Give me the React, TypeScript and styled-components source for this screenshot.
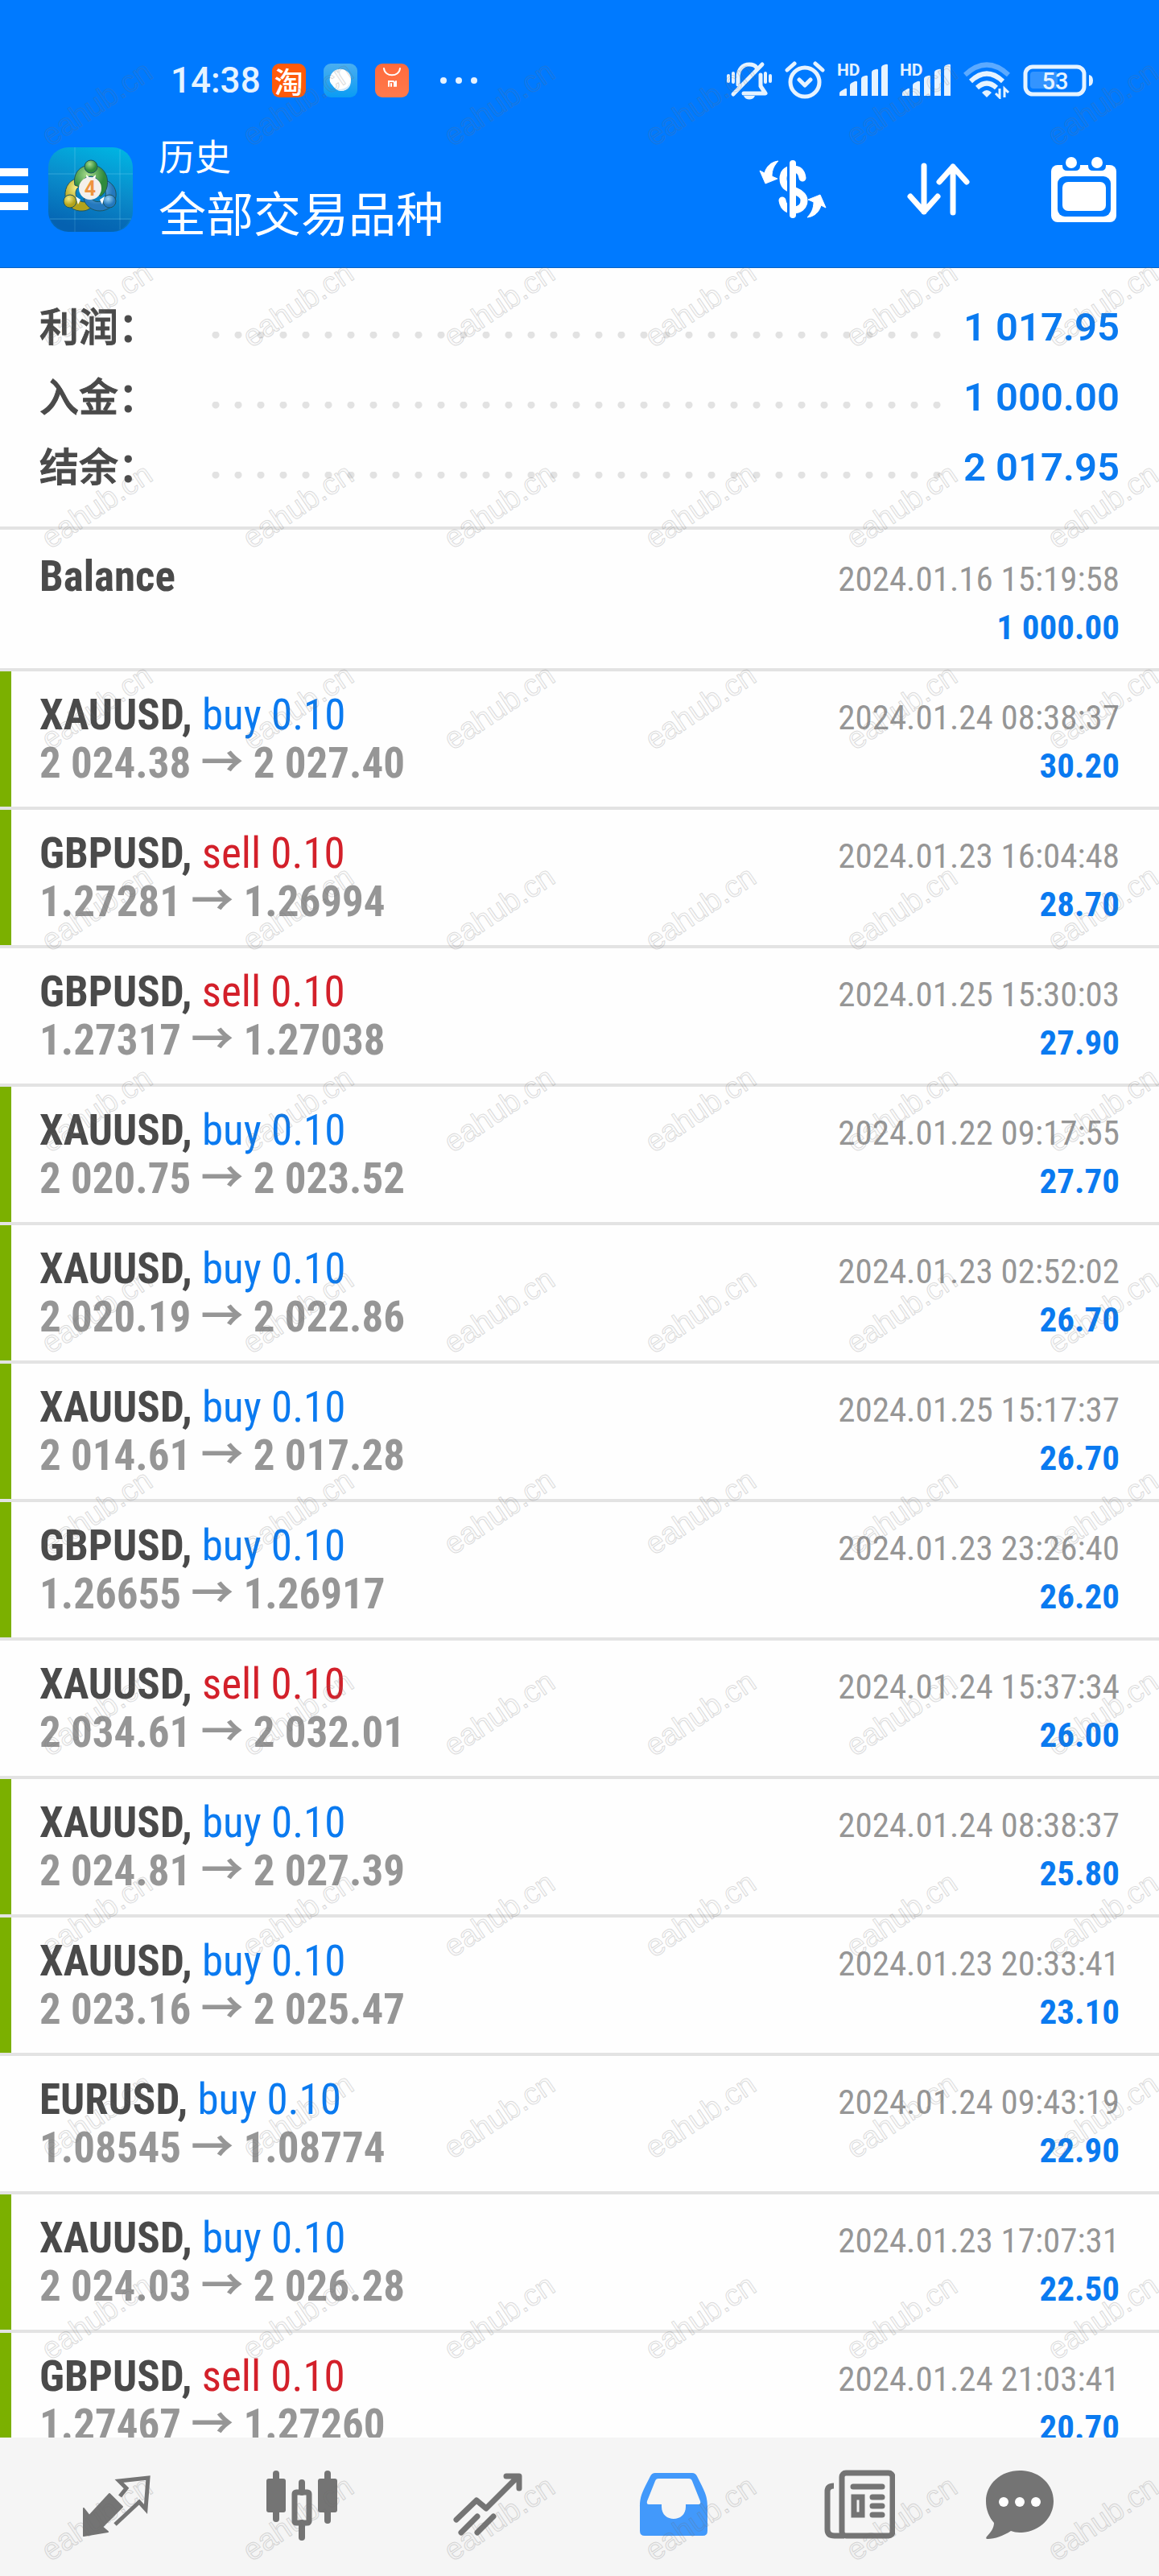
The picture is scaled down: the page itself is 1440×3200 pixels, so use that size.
import React from 'react';
import styled, { createGlobalStyle } from 'styled-components';

const color = {
  header: '#007aff',
  headerEdge: '#0a63c4',
  accent: '#0a7af0',
  sell: '#d3202a',
  ink: '#4a4a4a',
  muted: '#969696',
  line: '#e3e3e3',
  mark: '#7bb000',
  nav: '#f5f5f5',
  navIcon: '#747474',
  navActive: '#4299fb',
};

const sans = `Roboto, "Noto Sans CJK SC", sans-serif`;
const condensed = `"Roboto Condensed", Roboto, "Noto Sans CJK SC", sans-serif`;
const cjk = `"Noto Sans CJK SC", sans-serif`;

const GlobalStyle = createGlobalStyle`
  * { box-sizing: border-box; }
  body { margin: 0; background: #fefefe; font-family: ${sans}; }
  button { border: 0; margin: 0; padding: 0; background: none; color: inherit; font: inherit; cursor: pointer; }
`;

const Screen = styled.div`
  position: relative;
  display: flex;
  flex-direction: column;
  height: 100vh;
  overflow: hidden;
`;

const Header = styled.header`
  flex: none;
  color: #fff;
  background: ${color.header};
  border-bottom: 1px solid ${color.headerEdge};
`;

const StatusBar = styled.div`
  display: flex;
  align-items: center;
  justify-content: space-between;
  height: 140px;
  padding: 60px 82px 0 212px;
  color: #e6f3ff;
`;

const StatusGroup = styled.div<{ $gap: number }>`
  display: flex;
  align-items: center;
  gap: ${(p) => p.$gap}px;
`;

const Clock = styled.time`
  font-size: 44px;
  font-weight: 500;
  line-height: 44px;
`;

const AppBadge = styled.span<{ $bg: string }>`
  display: flex;
  align-items: center;
  justify-content: center;
  width: 42px;
  height: 42px;
  border-radius: 9px;
  background: ${(p) => p.$bg};
  color: #fff;
  font: 500 36px/42px ${cjk};
`;

const TitleBar = styled.div`
  display: flex;
  align-items: center;
  height: 192px;
  padding: 0 45px 2px 0;
`;

const MenuButton = styled.button`
  display: flex;
  flex-direction: column;
  gap: 11px;
  width: 60px;
`;

const MenuLine = styled.span`
  width: 35px;
  height: 10px;
  background: #fff;
`;

const Titles = styled.div`
  flex: 1;
  padding: 0 0 4px 32px;
  font-family: ${cjk};
`;

const Caption = styled.div`
  font-size: 45px;
  line-height: 60px;
`;

const Heading = styled.h1`
  margin: 0;
  font-size: 59px;
  font-weight: 400;
  line-height: 80px;
`;

const Actions = styled.div`
  display: flex;
  gap: 85px;
`;

const IconButton = styled.button`
  display: flex;
  align-items: center;
  justify-content: center;
  width: 96px;
  height: 96px;
`;

const Summary = styled.dl`
  flex: none;
  margin: 0;
  padding: 30px 49px;
  border-bottom: 4px solid ${color.line};
`;

const SummaryRow = styled.div`
  display: flex;
  align-items: center;
  height: 87px;
`;

const SummaryLabel = styled.dt`
  width: 214px;
  padding-bottom: 7px;
  color: ${color.ink};
  font: 500 49px/80px ${cjk};
  -webkit-text-stroke: 1px ${color.ink};
`;

const Leader = styled.span`
  flex: 1;
  height: 29px;
  background: radial-gradient(circle at 5px 4px, #e2e2e2 4px, transparent 5px) left bottom / 28px 9px repeat-x;
`;

const SummaryValue = styled.dd`
  min-width: 221px;
  margin: 0;
  color: ${color.accent};
  font-size: 49px;
  font-weight: 600;
  line-height: 87px;
  text-align: right;
`;

const Deals = styled.ul`
  flex: 1;
  min-height: 0;
  margin: 0;
  padding: 4px 0 0;
  overflow-y: auto;
  scrollbar-width: none;
  list-style: none;
  font-family: ${condensed};
`;

const Deal = styled.li`
  position: relative;
  padding: 24px 49px;
  border-bottom: 4px solid ${color.line};
`;

const Mark = styled.span`
  position: absolute;
  inset: 0 auto 0 0;
  width: 14px;
  background: ${color.mark};
`;

const Line = styled.div`
  display: flex;
  align-items: baseline;
  justify-content: space-between;
  height: 60px;
  font-size: 54px;
  line-height: 60px;
  white-space: pre;

  /* keeps the baseline of a line that holds only small text */
  &::before {
    content: '\\200b';
    width: 0;
  }
`;

const Symbol = styled.span`
  margin-right: auto;
  color: ${color.ink};
  font-size: 53px;
  font-weight: 700;
`;

const Side = styled.span<{ $sell: boolean }>`
  color: ${(p) => (p.$sell ? color.sell : color.accent)};
  font-weight: 400;
`;

const Prices = styled.span`
  color: ${color.muted};
  font-size: 53px;
  font-weight: 700;
`;

const Arrow = styled.span`
  font-family: ${cjk};
  font-weight: 700;
  line-height: 0;
`;

const Stamp = styled.time`
  color: ${color.muted};
  font-size: 43px;
`;

const Profit = styled.span`
  margin-left: auto;
  color: ${color.accent};
  font-size: 43px;
  font-weight: 700;
`;

const NavBar = styled.nav`
  flex: none;
  display: grid;
  grid-template-columns: repeat(5, 231fr) 168fr;
  height: 172px;
  padding: 0 89px 4px 28px;
  background: ${color.nav};
`;

const NavButton = styled.button<{ $active?: boolean }>`
  display: flex;
  align-items: center;
  justify-content: center;
  color: ${(p) => (p.$active ? color.navActive : color.navIcon)};
`;

const WatermarkLayer = styled.div`
  position: absolute;
  inset: 0 -250px 0 0;
  display: grid;
  grid-template-columns: repeat(auto-fill, 250px);
  grid-auto-rows: 250px;
  overflow: hidden;
  pointer-events: none;
`;

const Watermark = styled.span`
  display: flex;
  align-items: center;
  justify-content: center;
  padding-right: 12px;
  color: rgba(128, 128, 128, 0.04);
  font: 38px/40px "Liberation Sans", sans-serif;
  -webkit-text-stroke: 1px rgba(110, 110, 110, 0.25);
  transform: rotate(-34deg);
`;

const BellOff = () => (
  <svg width="56" height="48" viewBox="0 0 56 48" fill="none" stroke="currentColor" strokeWidth="5" strokeLinecap="round" strokeLinejoin="round">
    <path d="M8 41 44 4M14 29V20C14 10 20 4 28 4c4 0 7 1 9 4M42 17v14l6 9H21" />
    <path d="M2 18v7M8 15v11M48 15v11M54 18v7" strokeWidth="4" />
    <path d="M21 43h14c-2 6-12 6-14 0z" fill="currentColor" stroke="none" />
  </svg>
);

const Alarm = () => (
  <svg width="50" height="48" viewBox="0 0 50 48" fill="none" stroke="currentColor" strokeWidth="5" strokeLinecap="round" strokeLinejoin="round">
    <circle cx="25" cy="26" r="18" />
    <path d="m18 23 7 7 7-7M3 11l9-8M47 11l-9-8" />
  </svg>
);

const Signal = () => (
  <svg width="62" height="42" viewBox="0 0 62 42" fill="currentColor" overflow="visible">
    <text x="-1" y="15" fontFamily="Roboto, sans-serif" fontSize="21" fontWeight="700">HD</text>
    <path d="M2 37q0-2 2-3l5-3q2-1 2 1v8H2zM15 27q0-2 2-3l4-2q3-1 3 1v17h-9zM29 19q0-2 2-3l3-1q3-1 3 1v24h-8zM42 11q0-2 2-3l3-1q3-1 3 1v32h-8zM54 5q0-2 2-3l3-1q3-1 3 1v38h-8z" />
  </svg>
);

const Wifi = () => (
  <svg width="58" height="46" viewBox="0 0 58 46" fill="none" stroke="currentColor" strokeWidth="6">
    <path d="M2 16Q29-9 56 16" opacity=".4" />
    <path d="M9 24q20-19 40 0M17 32q12-11 24 0" />
    <path d="m29 44-6-6q6-6 12 0z" fill="currentColor" stroke="none" />
    <path d="M45 33v11l-5-5M51 44V33l5 5" strokeWidth="3" />
  </svg>
);

const Battery = () => (
  <svg width="87" height="40" viewBox="0 0 87 40" overflow="visible">
    <rect x="9" y="9" width="34" height="21" rx="4" fill="#fff" opacity=".2" />
    <rect x="3" y="3" width="73" height="34" rx="9" fill="none" stroke="currentColor" strokeWidth="5" />
    <path d="M82 13q5 1 5 7t-5 7z" fill="currentColor" />
    <text x="40" y="31" textAnchor="middle" fill="currentColor" fontFamily="Roboto, sans-serif" fontSize="29" fontWeight="500">53</text>
  </svg>
);

const BirdIcon = () => (
  <svg width="42" height="42" viewBox="0 0 42 42">
    <path d="M8 17C10 10 16 6 23 7c7 1 12 7 11 14 0 8-5 13-12 13-5 0-8-3-11-7-3-3-4-6-3-10z" fill="#fff" />
    <path d="M33 15c3 10-4 18-17 17 10 5 20-1 17-17z" fill="#cfe8fb" />
  </svg>
);

const StoreIcon = () => (
  <svg width="42" height="42" viewBox="0 0 42 42" fill="none" stroke="#fff" strokeWidth="2" strokeLinecap="round">
    <path d="M11 6c1 11 19 11 20 0" />
    <path d="M17 28v-6h5q2 0 2 2v4M20 25v3M26 22v6" />
  </svg>
);

const MoreIcon = styled.svg`
  margin-left: 16px;
`;

const More = () => (
  <MoreIcon width="48" height="10" viewBox="0 0 48 10" fill="currentColor">
    <circle cx="5" cy="5" r="4" />
    <circle cx="24" cy="5" r="4" />
    <circle cx="43" cy="5" r="4" />
  </MoreIcon>
);

const AppLogo = () => (
  <svg width="105" height="105" viewBox="0 0 105 105">
    <defs>
      <linearGradient id="tile" x1=".8" y1="0" x2=".5" y2="1">
        <stop offset="0" stopColor="#00b4e2" />
        <stop offset=".5" stopColor="#0a8ccb" />
        <stop offset="1" stopColor="#0566b4" />
      </linearGradient>
      <radialGradient id="green" cx=".4" cy=".3">
        <stop offset="0" stopColor="#a9dc8c" />
        <stop offset="1" stopColor="#2f8a3c" />
      </radialGradient>
      <radialGradient id="yellow" cx=".4" cy=".3">
        <stop offset="0" stopColor="#f4ec86" />
        <stop offset="1" stopColor="#b3a31c" />
      </radialGradient>
      <radialGradient id="blue" cx=".4" cy=".3">
        <stop offset="0" stopColor="#9ad4f5" />
        <stop offset="1" stopColor="#2478bd" />
      </radialGradient>
    </defs>
    <rect width="105" height="105" rx="25" fill="url(#tile)" />
    <path d="M33 0v105M89 3v99M0 33h105M2 89h101" stroke="#7fd6f2" strokeOpacity=".35" />
    <path d="M4 90q8 15 26 15h45q18 0 26-15z" fill="#0559a8" opacity=".35" />
    <g stroke="#1d5561" strokeWidth="1">
      <path d="M41 38c-14 0-21 11-20 23 1 12 11 19 22 18 4 0 8-2 11-5l-5-7c-8 3-15-2-15-10 0-5 3-8 7-9z" fill="url(#yellow)" />
      <path d="M72 41c9 4 13 12 12 20-1 11-10 18-20 18-9 0-18-6-20-15l8-2c4 6 12 8 17 2 4-5 3-10-1-14z" fill="url(#blue)" />
      <path d="M33 47c-3-14 6-25 20-25s23 12 20 27c-1 5-4 9-8 12l-7-5c8-8 6-19-5-20-8 0-13 7-12 14z" fill="url(#green)" />
      <circle cx="53" cy="24" r="8" fill="url(#green)" />
      <circle cx="27" cy="67" r="8" fill="url(#yellow)" />
      <circle cx="76" cy="67" r="8" fill="url(#blue)" />
    </g>
    <path d="m47 34 6 5 6-5-1 8H48zM34 61l6 4-3 6zM70 61l-6 4 3 6z" fill="#fff" />
    <circle cx="52" cy="51" r="14" fill="#f4f0ec" />
    <text x="52" y="60" textAnchor="middle" fontFamily="Roboto, sans-serif" fontSize="25" fontWeight="700" fill="#ee9440">4</text>
  </svg>
);

const CurrencyIcon = () => (
  <svg width="84" height="72" viewBox="0 0 84 72">
    <path d="M54 22C53 14 49 11 42 11c-8 0-12 5-12 12 0 9 5 11 12 14s14 6 14 13c0 8-6 12-14 12-8 0-12-5-13-12" fill="none" stroke="#fff" strokeWidth="9" strokeLinecap="round" />
    <path d="M37 4v64" stroke={color.header} strokeWidth="4" />
    <path d="M42 4v64" stroke="#fff" strokeWidth="8" strokeLinecap="round" />
    <path d="M24 1C15 2 9 8 7 16l-6-3 7 16 15-6-7-3C16 12 19 6 24 1z" fill="#fff" strokeLinejoin="round" stroke="#fff" />
    <path d="M60 71c9-1 15-7 17-15l6 3-7-16-15 6 7 3c0 8-3 14-8 19z" fill="#fff" strokeLinejoin="round" stroke="#fff" />
  </svg>
);

const SortIcon = () => (
  <svg width="78" height="66" viewBox="0 0 78 66" fill="none" stroke="#fff" strokeWidth="7" strokeLinecap="round" strokeLinejoin="round">
    <path d="M21 4v57M4 42l17 19 17-19M57 62V5M40 24 57 5l17 19" />
  </svg>
);

const CalendarIcon = () => (
  <svg width="82" height="82" viewBox="0 0 82 82">
    <rect y="11" width="81" height="71" rx="8" fill="#fff" />
    <path d="M14 8h22v4q0 6-6 6H20q-6 0-6-6zM46 8h22v4q0 6-6 6H52q-6 0-6-6z" fill={color.header} />
    <circle cx="25" cy="8" r="7" fill="#fff" />
    <circle cx="57" cy="8" r="7" fill="#fff" />
    <rect x="8" y="25" width="66" height="50" rx="9" fill={color.header} />
    <rect x="14" y="32" width="54" height="36" rx="7" fill="#fff" />
  </svg>
);

const QuotesIcon = () => (
  <svg width="88" height="88" viewBox="0 0 88 88">
    <path d="m4 48 7 9 25-27 16 16-25 25 7 6-30 5z" fill="currentColor" stroke="currentColor" strokeWidth="2" strokeLinejoin="round" />
    <path d="m49 33 8-10-9-9 36-4-3 39-8-9-30 28" fill="none" stroke="currentColor" strokeWidth="5" />
  </svg>
);

const ChartIcon = () => (
  <svg width="88" height="88" viewBox="0 0 88 88" fill="currentColor">
    <rect y="11" width="24" height="42" rx="3" />
    <rect x="8" y="1" width="8" height="64" rx="4" />
    <rect x="64" y="11" width="24" height="42" rx="3" />
    <rect x="72" y="1" width="8" height="66" rx="4" />
    <rect x="40" y="12" width="8" height="20" rx="4" />
    <rect x="40" y="62" width="8" height="26" rx="4" />
    <rect x="35" y="28" width="18" height="38" rx="2" fill="none" stroke="currentColor" strokeWidth="7" />
  </svg>
);

const TradeIcon = () => (
  <svg width="88" height="88" viewBox="0 0 88 88" fill="none" stroke="currentColor" strokeWidth="7" strokeLinecap="round" strokeLinejoin="round">
    <path d="m5 62 25-24 12 10 39-39M67 8h16v15M11 78l20-20M31 78l20-20" />
  </svg>
);

const InboxIcon = () => (
  <svg width="88" height="88" viewBox="0 0 88 88" fill="currentColor" fillRule="evenodd">
    <path d="M21 4h46q4 0 6 4c9 18 13 24 13 38v30q0 6-6 6H8q-6 0-6-6V46C2 32 6 26 15 8q2-4 6-4zM25 11q-3 0-4 3l-10 25q-1 4 2 4h16v3c0 20 30 20 30 0v-3h16q3 0 2-4L67 14q-1-3-4-3z" />
  </svg>
);

const NewsIcon = () => (
  <svg width="88" height="88" viewBox="0 0 88 88" fill="none" stroke="currentColor" strokeWidth="7">
    <rect x="22" y="4" width="63" height="78" rx="5" />
    <path d="M12 20q-8 0-8 7v47q0 8 9 8h12" />
    <rect x="37" y="34" width="10" height="22" />
    <path d="M36 21h36M60 34h12M60 45h12M60 56h12" strokeLinecap="round" />
  </svg>
);

const ChatIcon = () => (
  <svg width="88" height="88" viewBox="0 0 88 88">
    <path d="M44 1c24 0 42 17 42 38S68 78 44 78c-4 0-8-1-11-2-9 6-20 10-29 10q-3 0-1-3c5-5 9-11 9-17C6 59 2 50 2 39 2 18 20 1 44 1z" fill="currentColor" />
    <g fill="#fff">
      <circle cx="24" cy="40" r="6" />
      <circle cx="44" cy="40" r="6" />
      <circle cx="64" cy="40" r="6" />
    </g>
  </svg>
);

const summary = [
  ['利润：', '1 017.95'],
  ['入金：', '1 000.00'],
  ['结余：', '2 017.95'],
];

type DealRow = {
  symbol: string;
  side: 'buy' | 'sell';
  open: string;
  close: string;
  time: string;
  profit: string;
  marked: boolean;
};

const row = (symbol: string, side: 'buy' | 'sell', open: string, close: string, time: string, profit: string, marked = true): DealRow => ({
  symbol, side, open, close, time, profit, marked,
});

const deals: DealRow[] = [
  row('XAUUSD', 'buy', '2 024.38', '2 027.40', '2024.01.24 08:38:37', '30.20'),
  row('GBPUSD', 'sell', '1.27281', '1.26994', '2024.01.23 16:04:48', '28.70'),
  row('GBPUSD', 'sell', '1.27317', '1.27038', '2024.01.25 15:30:03', '27.90', false),
  row('XAUUSD', 'buy', '2 020.75', '2 023.52', '2024.01.22 09:17:55', '27.70'),
  row('XAUUSD', 'buy', '2 020.19', '2 022.86', '2024.01.23 02:52:02', '26.70'),
  row('XAUUSD', 'buy', '2 014.61', '2 017.28', '2024.01.25 15:17:37', '26.70'),
  row('GBPUSD', 'buy', '1.26655', '1.26917', '2024.01.23 23:26:40', '26.20'),
  row('XAUUSD', 'sell', '2 034.61', '2 032.01', '2024.01.24 15:37:34', '26.00', false),
  row('XAUUSD', 'buy', '2 024.81', '2 027.39', '2024.01.24 08:38:37', '25.80'),
  row('XAUUSD', 'buy', '2 023.16', '2 025.47', '2024.01.23 20:33:41', '23.10'),
  row('EURUSD', 'buy', '1.08545', '1.08774', '2024.01.24 09:43:19', '22.90', false),
  row('XAUUSD', 'buy', '2 024.03', '2 026.28', '2024.01.23 17:07:31', '22.50'),
  row('GBPUSD', 'sell', '1.27467', '1.27260', '2024.01.24 21:03:41', '20.70'),
];

const tabs = [
  { label: '行情', Icon: QuotesIcon },
  { label: '图表', Icon: ChartIcon },
  { label: '交易', Icon: TradeIcon },
  { label: '历史', Icon: InboxIcon, active: true },
  { label: '新闻', Icon: NewsIcon },
  { label: '消息', Icon: ChatIcon },
];

export default function App() {
  return (
    <Screen>
      <GlobalStyle />
      <Header>
        <StatusBar>
          <StatusGroup $gap={14}>
            <Clock>14:38</Clock>
            <StatusGroup $gap={22}>
              <AppBadge $bg="#ff5a0a">淘</AppBadge>
              <AppBadge $bg="linear-gradient(#4aaef0, #0a9cf4)"><BirdIcon /></AppBadge>
              <AppBadge $bg="linear-gradient(#ff6a3c, #ff7a4c)"><StoreIcon /></AppBadge>
              <More />
            </StatusGroup>
          </StatusGroup>
          <StatusGroup $gap={16}>
            <BellOff />
            <Alarm />
            <Signal />
            <Signal />
            <Wifi />
            <Battery />
          </StatusGroup>
        </StatusBar>
        <TitleBar>
          <MenuButton aria-label="菜单">
            <MenuLine />
            <MenuLine />
            <MenuLine />
          </MenuButton>
          <AppLogo />
          <Titles>
            <Caption>历史</Caption>
            <Heading>全部交易品种</Heading>
          </Titles>
          <Actions>
            <IconButton aria-label="交易品种"><CurrencyIcon /></IconButton>
            <IconButton aria-label="排序"><SortIcon /></IconButton>
            <IconButton aria-label="日期"><CalendarIcon /></IconButton>
          </Actions>
        </TitleBar>
      </Header>

      <Summary>
        {summary.map(([label, value]) => (
          <SummaryRow key={label}>
            <SummaryLabel>{label}</SummaryLabel>
            <Leader />
            <SummaryValue>{value}</SummaryValue>
          </SummaryRow>
        ))}
      </Summary>

      <Deals>
        <Deal>
          <Line>
            <Symbol>Balance</Symbol>
            <Stamp>2024.01.16 15:19:58</Stamp>
          </Line>
          <Line>
            <Profit>1 000.00</Profit>
          </Line>
        </Deal>
        {deals.map((d) => (
          <Deal key={d.symbol + d.open}>
            {d.marked && <Mark />}
            <Line>
              <Symbol>
                {d.symbol}, <Side $sell={d.side === 'sell'}>{d.side} 0.10</Side>
              </Symbol>
              <Stamp>{d.time}</Stamp>
            </Line>
            <Line>
              <Prices>
                {d.open} <Arrow>→</Arrow> {d.close}
              </Prices>
              <Profit>{d.profit}</Profit>
            </Line>
          </Deal>
        ))}
      </Deals>

      <NavBar>
        {tabs.map(({ label, Icon, active }) => (
          <NavButton key={label} aria-label={label} $active={active}>
            <Icon />
          </NavButton>
        ))}
      </NavBar>

      <WatermarkLayer aria-hidden="true">
        {Array.from({ length: 78 }, (_, i) => (
          <Watermark key={i}>eahub.cn</Watermark>
        ))}
      </WatermarkLayer>
    </Screen>
  );
}
